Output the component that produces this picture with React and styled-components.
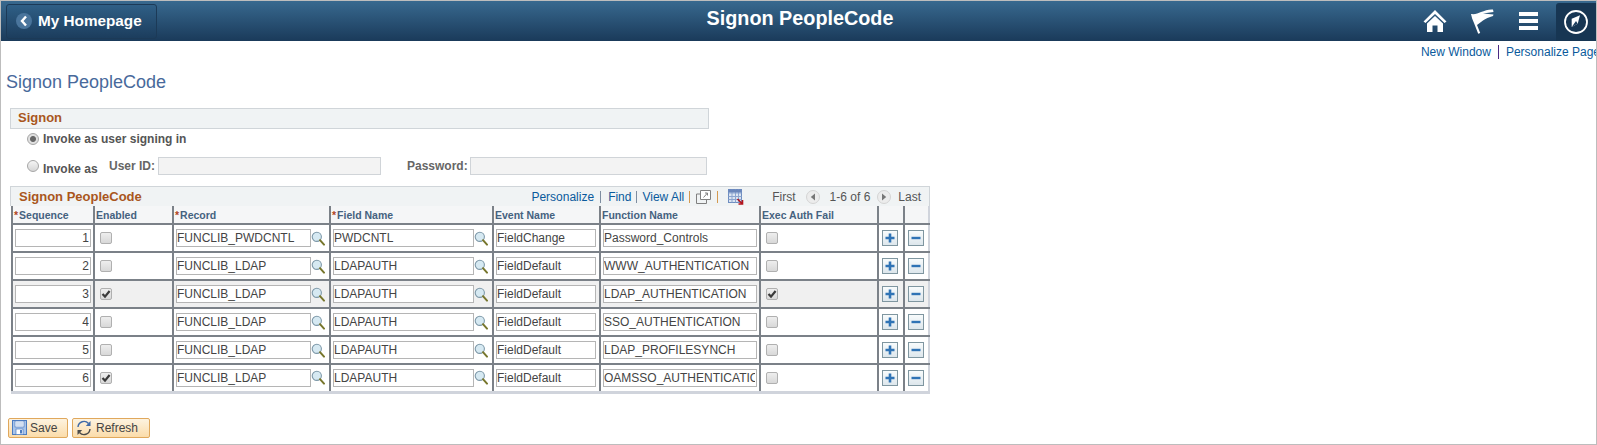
import styled, { createGlobalStyle } from "styled-components";

const GlobalStyle = createGlobalStyle`
  html, body { margin: 0; padding: 0; background: #fff; }
  body { font-family: "Liberation Sans", Arial, sans-serif; font-size: 12px; }
  * { box-sizing: border-box; }
`;

const rows = [
  { seq: 1, enabled: false, record: "FUNCLIB_PWDCNTL", field: "PWDCNTL", event: "FieldChange", fn: "Password_Controls", fail: false },
  { seq: 2, enabled: false, record: "FUNCLIB_LDAP", field: "LDAPAUTH", event: "FieldDefault", fn: "WWW_AUTHENTICATION", fail: false },
  { seq: 3, enabled: true, record: "FUNCLIB_LDAP", field: "LDAPAUTH", event: "FieldDefault", fn: "LDAP_AUTHENTICATION", fail: true },
  { seq: 4, enabled: false, record: "FUNCLIB_LDAP", field: "LDAPAUTH", event: "FieldDefault", fn: "SSO_AUTHENTICATION", fail: false },
  { seq: 5, enabled: false, record: "FUNCLIB_LDAP", field: "LDAPAUTH", event: "FieldDefault", fn: "LDAP_PROFILESYNCH", fail: false },
  { seq: 6, enabled: true, record: "FUNCLIB_LDAP", field: "LDAPAUTH", event: "FieldDefault", fn: "OAMSSO_AUTHENTICATION", fail: false },
];

function Lookup() {
  return (
    <svg width="14" height="15" viewBox="0 0 14 15">
      <circle cx="5.8" cy="5.8" r="4.6" fill="#d6e9f2" stroke="#7d98a8" strokeWidth="1.1" />
      <path d="M9 9.2 L13 13.6" stroke="#77762c" strokeWidth="2" strokeLinecap="round" />
    </svg>
  );
}

function Check({ checked }) {
  return (
    <CheckBox>
      {checked && (
        <svg width="10" height="10" viewBox="0 0 10 10">
          <path d="M1.5 5 L4 7.6 L8.6 2" fill="none" stroke="#3a3a3a" strokeWidth="2.2" />
        </svg>
      )}
    </CheckBox>
  );
}

export default function App() {
  return (
    <>
      <GlobalStyle />
      <Page>
        <Banner>
          <HomeButton>
            <BackDot>
              <svg width="10" height="12" viewBox="0 0 10 12">
                <path d="M7 1.5 L3 6 L7 10.5" fill="none" stroke="#fff" strokeWidth="2.4" />
              </svg>
            </BackDot>
            My Homepage
          </HomeButton>
          <BannerTitle>Signon PeopleCode</BannerTitle>
          <BannerIcons>
            <BannerIcon>
              <svg width="26" height="26" viewBox="0 0 26 26">
                <path d="M13 2 L1.5 13.5 L3.5 15 L13 6 L22.5 15 L24.5 13.5 Z" fill="#fff" />
                <path d="M5 15.5 L13 8 L21 15.5 V24 H15.5 V17.5 H10.5 V24 H5 Z" fill="#fff" />
              </svg>
            </BannerIcon>
            <BannerIcon>
              <svg width="26" height="27" viewBox="0 0 26 27">
                <path d="M2 6 C6 6.5 9 5.5 12 4 C16 2.5 20 1 24 1.5 L24.5 4 L14 5.5 L24.5 6.5 L24 8 C20 9 16.5 11 14 12.5 C12 14 10 15.5 8 17 L11.2 25 L9.2 25.8 L5 15 C3.5 12 2.5 9 2 6 Z" fill="#fff" />
              </svg>
            </BannerIcon>
            <BannerIcon>
              <MenuBars>
                <i />
                <i />
                <i />
              </MenuBars>
            </BannerIcon>
            <NavBox>
              <svg width="26" height="26" viewBox="0 0 26 26">
                <circle cx="13" cy="13" r="11" fill="none" stroke="#fff" strokeWidth="1.8" />
                <path d="M8.7 9.7 L17 6.3 L14.7 14.7 L8.7 18 Z" fill="#fff" />
                <path d="M8.7 18 L13 12 L14.7 14.7 Z" fill="#1b3c5c" />
              </svg>
            </NavBox>
          </BannerIcons>
        </Banner>

        <LinkRow>
          <TopLink>New Window</TopLink>
          <TopLinkSep />
          <TopLink>Personalize Page</TopLink>
        </LinkRow>

        <PageTitle>Signon PeopleCode</PageTitle>

        <SectionBar>Signon</SectionBar>
        <RadioRow>
          <Radio $on />
          <RadioLabel>Invoke as user signing in</RadioLabel>
        </RadioRow>
        <InvokeRow>
          <Radio />
          <InvokeLabel>Invoke as</InvokeLabel>
          <FieldLabel>User ID:</FieldLabel>
          <DisabledInput $width={223} />
          <PasswordLabel>Password:</PasswordLabel>
          <DisabledInput $width={237} />
        </InvokeRow>

        <Grid>
          <GridBar>
            <GridTitle>Signon PeopleCode</GridTitle>
            <GridTools>
              <GridLink>Personalize</GridLink>
              <Pipe />
              <GridLink $left={1}>Find</GridLink>
              <Pipe $tight />
              <GridLink $right={-1}>View All</GridLink>
              <Pipe $orange />
              <svg width="15" height="14" viewBox="0 0 15 14">
                <path d="M4.5 0.5 H14.5 V9.5 H4.5 Z" fill="#fff" stroke="#808080" />
                <path d="M0.5 4 H4.5 M0.5 4 V13.5 H10.5 V9.5" fill="none" stroke="#808080" />
                <path d="M7.5 7.5 L11.5 3 M9 3 H11.5 V5.5" fill="none" stroke="#808080" />
              </svg>
              <Pipe $orange />
              <GridIcon width="16" height="16" viewBox="0 0 16 16">
                <rect x="0.5" y="0.5" width="13" height="13" fill="#dbe4f2" stroke="#6e8dc0" />
                <path d="M0.5 4 H13.5 M0.5 7.5 H13.5 M0.5 10.5 H13.5 M4 0.5 V13.5 M7.5 0.5 V13.5 M10.5 0.5 V13.5" stroke="#8ba5cf" />
                <rect x="0.5" y="0.5" width="13" height="3" fill="#6a86bb" />
                <path d="M9.5 10 L14.5 15 M14.5 11 V15 H10.5" fill="none" stroke="#b3141c" strokeWidth="1.6" />
              </GridIcon>
              <Pager>First</Pager>
              <PagerDot>
                <svg width="6" height="8" viewBox="0 0 6 8">
                  <path d="M5 0.5 V7.5 L0.8 4 Z" fill="#777" />
                </svg>
              </PagerDot>
              <PagerCount>1-6 of 6</PagerCount>
              <PagerDot>
                <svg width="6" height="8" viewBox="0 0 6 8">
                  <path d="M1 0.5 V7.5 L5.2 4 Z" fill="#777" />
                </svg>
              </PagerDot>
              <PagerLast>Last</PagerLast>
            </GridTools>
          </GridBar>
          <Table>
            <colgroup>
              <col width="82" />
              <col width="79" />
              <col width="157" />
              <col width="163" />
              <col width="107" />
              <col width="160" />
              <col width="118" />
              <col width="26" />
              <col width="25" />
            </colgroup>
            <thead>
              <tr>
                <Th><Req>*</Req>Sequence</Th>
                <Th>Enabled</Th>
                <Th><Req>*</Req>Record</Th>
                <Th><Req>*</Req>Field Name</Th>
                <Th>Event Name</Th>
                <Th>Function Name</Th>
                <Th>Exec Auth Fail</Th>
                <Th />
                <Th />
              </tr>
            </thead>
            <tbody>
              {rows.map((row) => (
                <Row key={row.seq} $active={row.seq === 3}>
                  <Td><TextBox $width={76} $right readOnly value={row.seq} /></Td>
                  <CheckTd><Check checked={row.enabled} /></CheckTd>
                  <Td>
                    <LookupCell>
                      <TextBox $width={135} readOnly value={row.record} />
                      <Lookup />
                    </LookupCell>
                  </Td>
                  <Td>
                    <LookupCell>
                      <TextBox $width={141} readOnly value={row.field} />
                      <Lookup />
                    </LookupCell>
                  </Td>
                  <Td><TextBox $width={100} readOnly value={row.event} /></Td>
                  <Td><TextBox $width={154} readOnly value={row.fn} /></Td>
                  <CheckTd><Check checked={row.fail} /></CheckTd>
                  <ActionTd>
                    <RowAction>
                      <svg width="10" height="10" viewBox="0 0 10 10">
                        <path d="M5 0.5 V9.5 M0.5 5 H9.5" stroke="#2f73b5" strokeWidth="2.6" />
                      </svg>
                    </RowAction>
                  </ActionTd>
                  <ActionTd>
                    <RowAction>
                      <svg width="10" height="10" viewBox="0 0 10 10">
                        <path d="M0.5 5 H9.5" stroke="#2f73b5" strokeWidth="2.4" />
                      </svg>
                    </RowAction>
                  </ActionTd>
                </Row>
              ))}
            </tbody>
          </Table>
        </Grid>

        <Footer>
          <PsButton $width={60}>
            <svg width="15" height="15" viewBox="0 0 15 15">
              <rect x="0.5" y="0.5" width="14" height="14" fill="#a9c5ea" stroke="#4d7cc0" />
              <rect x="3" y="1" width="9" height="6" fill="#fff" stroke="#4d7cc0" strokeWidth="0.7" />
              <path d="M4 3 H11 M4 5 H11" stroke="#8fb0dc" strokeWidth="0.8" />
              <rect x="4" y="9" width="7" height="5.5" fill="#fff" stroke="#4d7cc0" strokeWidth="0.7" />
              <rect x="8" y="10" width="2" height="3.5" fill="#4d7cc0" />
            </svg>
            Save
          </PsButton>
          <PsButton $width={78}>
            <svg width="16" height="16" viewBox="0 0 16 16">
              <path d="M2 7 A6 6 0 0 1 12.5 3.5" fill="none" stroke="#3f6aa8" strokeWidth="1.4" />
              <path d="M14.5 1 V6 H9.8 Z" fill="#3f6aa8" />
              <path d="M14 9 A6 6 0 0 1 3.5 12.5" fill="none" stroke="#4a4a4a" strokeWidth="1.4" />
              <path d="M1.5 15 V10 H6.2 Z" fill="#4a4a4a" />
            </svg>
            <RefreshText>Refresh</RefreshText>
          </PsButton>
        </Footer>
      </Page>
    </>
  );
}

const Page = styled.div`
  width: 1597px;
  height: 445px;
  overflow: hidden;
  border: 1px solid #bdbdbd;
  background: #fff;
  color: #555;
`;

const Banner = styled.header`
  display: grid;
  grid-template-columns: 1fr auto 1fr;
  align-items: center;
  height: 40px;
  padding-left: 5px;
  background: linear-gradient(#38698f, #1a3a5a);
`;

const HomeButton = styled.div`
  display: flex;
  align-items: center;
  gap: 6px;
  justify-self: start;
  width: 151px;
  height: 35px;
  padding-left: 9px;
  border: 1px solid #1c3a57;
  border-radius: 3px;
  background: linear-gradient(#2f5f86, #1c3d5d);
  color: #fff;
  font-size: 15.3px;
  font-weight: bold;
`;

const BackDot = styled.span`
  display: flex;
  align-items: center;
  justify-content: center;
  width: 16px;
  height: 16px;
  border-radius: 50%;
  background: #4a759c;
`;

const BannerTitle = styled.h1`
  margin: 0 2px 5px 0;
  color: #fff;
  font-size: 19.8px;
  font-weight: bold;
`;

const BannerIcons = styled.div`
  display: flex;
  align-items: center;
  justify-self: end;
  height: 100%;
`;

const BannerIcon = styled.span`
  display: flex;
  align-items: center;
  justify-content: center;
  width: 47px;
`;

const MenuBars = styled.span`
  display: flex;
  flex-direction: column;
  gap: 3px;
  i {
    display: block;
    width: 19px;
    height: 4px;
    background: #fff;
  }
`;

const NavBox = styled.span`
  display: flex;
  align-items: center;
  justify-content: center;
  width: 40px;
  height: 38px;
  margin: 2px 0 0 4px;
  border-radius: 3px 0 0 0;
  background: #173653;
`;

const LinkRow = styled.div`
  display: flex;
  justify-content: flex-end;
  align-items: center;
  height: 20px;
  gap: 7px;
  margin: 1px -4px 0 0;
`;

const TopLink = styled.a`
  color: #0a5a9c;
  font-size: 12px;
  white-space: nowrap;
`;

const TopLinkSep = styled.span`
  width: 1px;
  height: 14px;
  background: #4b2a83;
`;

const PageTitle = styled.h2`
  margin: 10px 0 0 5px;
  color: #48699b;
  font-size: 18px;
  font-weight: normal;
  line-height: 21px;
`;

const SectionBar = styled.div`
  width: 699px;
  height: 21px;
  margin: 15px 0 0 9px;
  padding-left: 7px;
  border: 1px solid #d0d5d9;
  background: #f0f3f4;
  color: #a9561c;
  font-size: 13px;
  font-weight: bold;
  line-height: 18px;
`;

const RadioRow = styled.div`
  display: flex;
  align-items: center;
  height: 20px;
  margin: 0 0 0 26px;
`;

const Radio = styled.span`
  display: block;
  flex: none;
  width: 12px;
  height: 12px;
  border: 1px solid #a6a6a6;
  border-radius: 50%;
  background: ${(p) =>
    p.$on
      ? "radial-gradient(circle, #666 0 2.5px, #e0e0e0 3.5px)"
      : "linear-gradient(#f5f5f5, #d6d6d6)"};
`;

const RadioLabel = styled.span`
  margin-left: 4px;
  color: #555;
  font-weight: bold;
`;

const InvokeRow = styled.div`
  display: flex;
  align-items: center;
  height: 20px;
  margin: 7px 0 0 26px;
`;

const InvokeLabel = styled.span`
  width: 66px;
  margin: 5px 0 0 4px;
  color: #555;
  font-weight: bold;
`;

const FieldLabel = styled.span`
  width: 49px;
  color: #666;
  font-weight: bold;
`;

const PasswordLabel = styled.span`
  width: 63px;
  margin-left: 26px;
  color: #666;
  font-weight: bold;
`;

const DisabledInput = styled.span`
  display: block;
  width: ${(p) => p.$width}px;
  height: 18px;
  border: 1px solid #d0d4d8;
  background: #f3f3f3;
`;

const Grid = styled.section`
  width: 920px;
  margin: 10px 0 0 9px;
`;

const GridBar = styled.div`
  display: flex;
  align-items: center;
  justify-content: space-between;
  height: 20px;
  padding: 0 3px 0 8px;
  border: 1px solid #d0d5d9;
  border-bottom: 0;
  background: #f0f3f4;
`;

const GridTitle = styled.span`
  color: #a9561c;
  font-size: 13px;
  font-weight: bold;
`;

const GridTools = styled.div`
  display: flex;
  align-items: center;
  gap: 5px;
`;

const GridLink = styled.a`
  color: #0a5a9c;
  margin-left: ${(p) => p.$left || 0}px;
  margin-right: ${(p) => p.$right || 0}px;
`;

const GridIcon = styled.svg`
  margin-left: 4px;
`;

const Pipe = styled.span`
  width: 1px;
  height: 12px;
  margin: ${(p) => (p.$tight ? "0" : "0 1px")};
  background: ${(p) => (p.$orange ? "#d49a50" : "#7d8da0")};
`;

const Pager = styled.span`
  margin: 0 5px 0 23px;
  color: #555;
`;

const PagerCount = styled.span`
  margin: 0 2px 0 5px;
  color: #555;
`;

const PagerLast = styled.span`
  margin: 0 5px 0 2px;
  color: #555;
`;

const PagerDot = styled.span`
  display: flex;
  align-items: center;
  justify-content: center;
  width: 14px;
  height: 14px;
  border: 1px solid #d4d4d4;
  border-radius: 50%;
  background: #ececec;
`;

const Table = styled.table`
  width: 917px;
  margin-left: 1px;
  table-layout: fixed;
  border-collapse: collapse;
  border-bottom: 3px solid #d0d4dc;
  border-right: 2px solid #d0d4dc;
`;

const Th = styled.th`
  height: 18px;
  padding: 0 0 0 1px;
  border-left: 2px solid #7b8188;
  background: #f5f6f7;
  color: #45627f;
  font-size: 10.5px;
  font-weight: bold;
  text-align: left;
  white-space: nowrap;
`;

const Req = styled.span`
  color: #b0451c;
  margin-right: 1px;
`;

const Row = styled.tr`
  height: 28px;
  background: ${(p) => (p.$active ? "#f0f0f0" : "#fff")};
`;

const Td = styled.td`
  padding: 0 0 0 2px;
  border-left: 2px solid #7b8188;
  border-top: 2px solid #7b8188;
`;

const CheckTd = styled(Td)`
  padding-left: 5px;
`;

const ActionTd = styled(Td)`
  padding-left: 3px;
`;

const LookupCell = styled.div`
  display: flex;
  align-items: center;
`;

const TextBox = styled.input`
  display: block;
  width: ${(p) => p.$width}px;
  height: 18px;
  padding: 0 1px 0 0;
  border: 1px solid #b5b5b5;
  background: #fff;
  color: #444;
  font-family: "Liberation Sans", Arial, sans-serif;
  font-size: 12px;
  text-align: ${(p) => (p.$right ? "right" : "left")};
  outline: none;
`;

const CheckBox = styled.span`
  display: flex;
  align-items: center;
  justify-content: center;
  width: 12px;
  height: 12px;
  border: 1px solid #b0b0b0;
  border-radius: 2px;
  background: linear-gradient(#eee, #d8d8d8);
`;

const RowAction = styled.span`
  display: flex;
  align-items: center;
  justify-content: center;
  width: 16px;
  height: 16px;
  border: 1px solid #7f96a0;
  background: linear-gradient(#f8fbfc, #dde6ec);
`;

const Footer = styled.footer`
  display: flex;
  gap: 4px;
  margin: 24px 0 0 7px;
`;

const PsButton = styled.button`
  display: flex;
  align-items: center;
  gap: 3px;
  width: ${(p) => p.$width}px;
  height: 20px;
  padding: 0 0 0 3px;
  border: 1px solid #e0a85c;
  border-radius: 2px;
  background: linear-gradient(#fdf3e0, #fbdcaa);
  color: #444;
  font-family: "Liberation Sans", Arial, sans-serif;
  font-size: 12px;
`;

const RefreshText = styled.span`
  margin-left: 1px;
`;
